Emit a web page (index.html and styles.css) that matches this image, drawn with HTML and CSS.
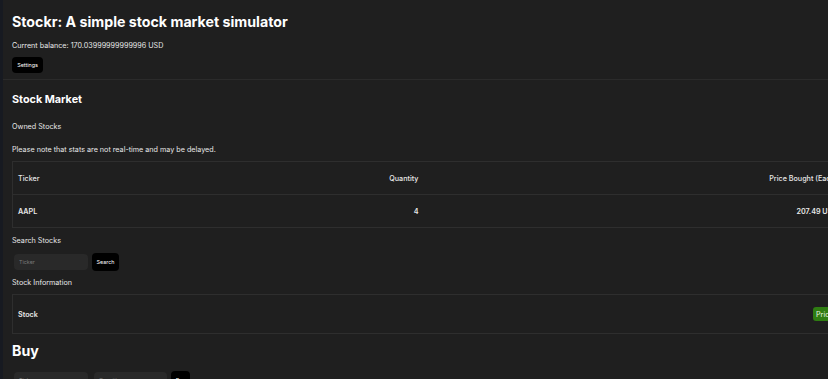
FILE: index.html
```html
<!DOCTYPE html>
<html lang="en">
<head>
<meta charset="utf-8">
<title>Stockr</title>
<link rel="stylesheet" href="styles.css">
</head>
<body>
<div class="page">
  <header class="top">
    <h1 class="title">Stockr: A simple stock market simulator</h1>
    <p class="balance">Current balance: 170.03999999999996 USD</p>
    <button class="btn settings">Settings</button>
  </header>
  <hr class="rule">
  <main class="market">
    <h2 class="h2">Stock Market</h2>
    <p class="label owned">Owned Stocks</p>
    <p class="label note">Please note that stats are not real-time and may be delayed.</p>
    <table class="stocks">
      <colgroup><col class="c1"><col class="c2"><col class="c3"><col class="c4"></colgroup>
      <thead>
        <tr><th class="left">Ticker</th><th>Quantity</th><th>Price Bought (Each)</th><th>Current Price</th></tr>
      </thead>
      <tbody>
        <tr><td class="left">AAPL</td><td>4</td><td>207.49 USD</td><td>—</td></tr>
      </tbody>
    </table>
    <p class="label search-label">Search Stocks</p>
    <div class="form-row search-row">
      <input class="field" type="text" placeholder="Ticker">
      <button class="btn go">Search</button>
    </div>
    <p class="label info-label">Stock Information</p>
    <div class="info">
      <span class="info-name">Stock</span>
      <span class="badge">Price: —</span>
    </div>
    <h1 class="title buy">Buy</h1>
    <div class="form-row buy-row">
      <input class="field" type="text" placeholder="Ticker">
      <input class="field num" type="number" placeholder="Quantity">
      <button class="btn go small">Buy</button>
    </div>
  </main>
</div>
</body>
</html>
```
FILE: styles.css
```css
html, body {
  margin: 0;
  padding: 0;
  background: #1f1f1f;
  overflow: hidden;
}
body {
  font-family: Inter, "Noto Sans", sans-serif;
  font-size: 7.2px;
  color: #e8e8e8;
  line-height: normal;
}
.page {
  border-left: 3px solid #171a21;
  min-height: 379px;
  box-sizing: border-box;
  padding-left: 9px;
}
.top {
  display: flex;
  flex-direction: column;
  align-items: flex-start;
}
.title {
  margin: 13px 0 0;
  font-size: 14.2px;
  font-weight: 700;
  color: #ffffff;
}
.balance {
  margin: 11px 0 0;
}
.btn {
  background: #000;
  color: #fff;
  border: none;
  border-radius: 4px;
  font-family: Inter, "Noto Sans", sans-serif;
  font-size: 5.4px;
  padding: 0;
}
.settings {
  margin-top: 7px;
  width: 31px;
  height: 16px;
}
.rule {
  margin: 6px 0 0 -9px;
  border: none;
  border-top: 1px solid #2b2b2b;
  height: 0;
}
.market {
  display: flex;
  flex-direction: column;
  align-items: flex-start;
}
.h2 {
  margin: 13px 0 0;
  font-size: 10.8px;
  font-weight: 700;
  color: #fff;
}
.label {
  margin: 0;
}
.owned { margin-top: 16px; }
.note { margin-top: 14px; }
.stocks {
  margin-top: 7px;
  border-collapse: collapse;
  table-layout: fixed;
  width: 1260px;
  border: 1px solid #2e2e2e;
}
.c1 { width: 205px; }
.c2 { width: 206px; }
.c3 { width: 419px; }
.c4 { width: 430px; }
.stocks th, .stocks td {
  height: 33px;
  padding: 0 5px;
  text-align: right;
  font-weight: 500;
  border-bottom: 1px solid #2e2e2e;
  box-sizing: border-box;
}
.stocks td { font-weight: 600; }
.stocks .left { text-align: left; }
.search-label { margin-top: 8px; }
.form-row {
  display: flex;
  align-items: center;
  padding-left: 2px;
}
.search-row { margin-top: 8px; }
.field {
  width: 74px;
  height: 16px;
  box-sizing: border-box;
  background: #292929;
  border: none;
  border-radius: 4px;
  color: #ddd;
  font-family: Inter, "Noto Sans", sans-serif;
  font-size: 5.4px;
  padding: 0 5px;
  outline: none;
}
.field::placeholder { color: #7a7a7a; }
.go {
  margin-left: 4px;
  width: 27px;
  height: 18px;
}
.info-label { margin-top: 7px; }
.info {
  margin-top: 7px;
  width: 1000px;
  height: 40px;
  box-sizing: border-box;
  border: 1px solid #2e2e2e;
  display: grid;
  grid-template-columns: 795px auto;
  align-items: center;
  padding-left: 5px;
}
.info-name { font-weight: 600; }
.badge {
  background: #2f7d12;
  color: #e8f5e0;
  border-radius: 3px;
  height: 14px;
  display: flex;
  align-items: center;
  padding: 0 3px;
  font-size: 7.2px;
  justify-self: start;
}
.buy { margin-top: 8px; }
.buy-row { margin-top: 12px; }
.num { margin-left: 6px; width: 73px; }
.small { width: 19px; }
```
